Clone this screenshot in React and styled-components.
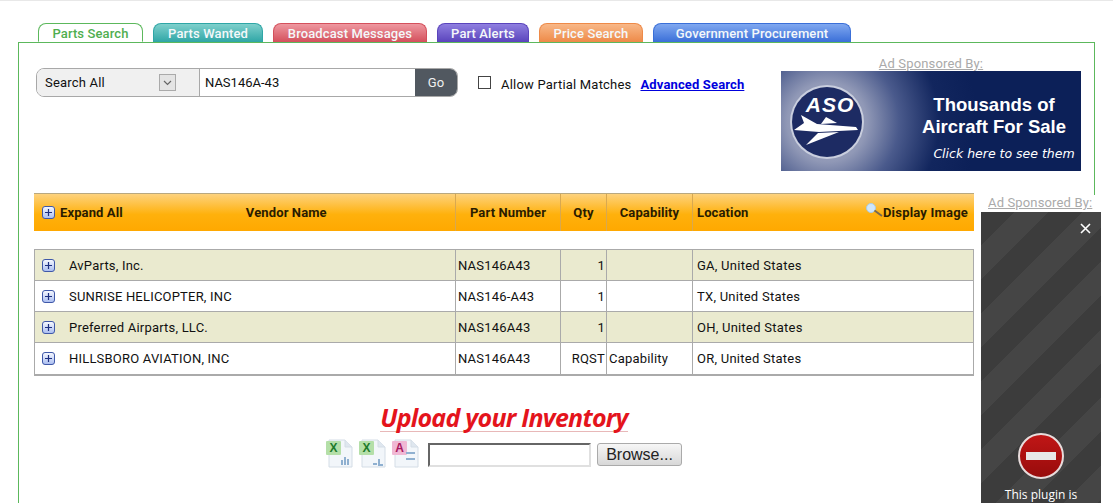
import styled, { createGlobalStyle } from 'styled-components';

const tabs = [
    { label: 'Parts Search', width: 105, active: true },
    { label: 'Parts Wanted', width: 110, from: '#7fd0cc', to: '#2fa6a6' },
    { label: 'Broadcast Messages', width: 154, from: '#ee98a0', to: '#d4505c' },
    { label: 'Part Alerts', width: 92, from: '#8f7fe0', to: '#5a44bc' },
    { label: 'Price Search', width: 104, from: '#f8b888', to: '#ee8a48' },
    { label: 'Government Procurement', width: 198, from: '#80a8f0', to: '#3a6fd8' },
];

const vendors = [
    { name: 'AvParts, Inc.', part: 'NAS146A43', qty: '1', capability: '', location: 'GA, United States' },
    { name: 'SUNRISE HELICOPTER, INC', part: 'NAS146-A43', qty: '1', capability: '', location: 'TX, United States' },
    { name: 'Preferred Airparts, LLC.', part: 'NAS146A43', qty: '1', capability: '', location: 'OH, United States' },
    { name: 'HILLSBORO AVIATION, INC', part: 'NAS146A43', qty: 'RQST', capability: 'Capability', location: 'OR, United States' },
];

const App = () => {
    return (
        <Page>
            <GlobalStyle />
            <TopLine />
            <TabBar>
                {tabs.map(tab => (
                    <Tab key={tab.label} $width={tab.width} $active={tab.active} $from={tab.from} $to={tab.to}>
                        {tab.label}
                    </Tab>
                ))}
            </TabBar>
            <Panel>
                <TopSection>
                    <SearchRow />
                    <BannerHolder />
                </TopSection>
                <ResultsHeader />
                <ResultsTable />
                <Upload />
            </Panel>
            <PluginAd />
        </Page>
    )
}

const SearchRow = () => {
    return (
        <SearchWrapper>
            <SearchBar>
                <SelectBox>
                    Search All
                    <SelectArrow>
                        <svg width="9" height="6" viewBox="0 0 9 6">
                            <path d="M1 1 L4.5 4.5 L8 1" fill="none" stroke="#666" strokeWidth="1.2" />
                        </svg>
                    </SelectArrow>
                </SelectBox>
                <SearchInput>NAS146A-43</SearchInput>
                <GoButton>Go</GoButton>
            </SearchBar>
            <CheckBox />
            <CheckLabel>Allow Partial Matches</CheckLabel>
            <AdvancedLink>Advanced Search</AdvancedLink>
        </SearchWrapper>
    )
}

const BannerHolder = () => {
    return (
        <BannerColumn>
            <SponsorLabel>Ad Sponsored By:</SponsorLabel>
            <Banner>
                <AsoLogo />
                <BannerText>
                    <BannerLine>Thousands of</BannerLine>
                    <BannerLine>Aircraft For Sale</BannerLine>
                    <BannerSmall>Click here to see them</BannerSmall>
                </BannerText>
            </Banner>
        </BannerColumn>
    )
}

const AsoLogo = () => {
    return (
        <svg width="76" height="76" viewBox="0 0 76 76">
            <circle cx="38" cy="38" r="37" fill="#c9cede" />
            <circle cx="38" cy="38" r="35" fill="#1d2b63" />
            <text x="41" y="28" textAnchor="middle" fill="#fff" fontFamily="Liberation Sans" fontWeight="700" fontStyle="italic" fontSize="21" letterSpacing="1">ASO</text>
            <path d="M5 46 L15 39 L12 31 L28 40 L67 43 L69 46 L30 48 Z" fill="#fff" />
            <path d="M17 61 L29 49 L50 48 Z" fill="#fff" />
            <path d="M32 40 L37 33 L48 39 Z" fill="#fff" />
        </svg>
    )
}

const PlusIcon = () => {
    return (
        <svg width="13" height="13" viewBox="0 0 13 13">
            <defs>
                <linearGradient id="plusFill" x1="0" y1="0" x2="0" y2="1">
                    <stop offset="0" stopColor="#f8faff" />
                    <stop offset="1" stopColor="#a8bcf0" />
                </linearGradient>
            </defs>
            <rect x="0.5" y="0.5" width="12" height="12" rx="2.5" fill="url(#plusFill)" stroke="#3f58a8" />
            <path d="M6.5 3 V10 M3 6.5 H10" stroke="#1d2f80" strokeWidth="1.2" />
        </svg>
    )
}

const ResultsHeader = () => {
    return (
        <HeaderRow>
            <HeaderFirst>
                <PlusIcon />
                <ExpandText>Expand All</ExpandText>
                <VendorTitle>Vendor Name</VendorTitle>
            </HeaderFirst>
            <HeaderCell $center>Part Number</HeaderCell>
            <HeaderCell $center>Qty</HeaderCell>
            <HeaderCell $center>Capability</HeaderCell>
            <HeaderCell>
                Location
                <DisplayImage>
                    <MagnifierIcon width="18" height="15" viewBox="0 0 18 15">
                        <circle cx="6" cy="5" r="4.5" fill="#cfe6fa" stroke="#a8cce8" />
                        <path d="M9.5 7.5 L17 13" stroke="#7a6a50" strokeWidth="2" />
                    </MagnifierIcon>
                    Display Image
                </DisplayImage>
            </HeaderCell>
        </HeaderRow>
    )
}

const ResultsTable = () => {
    return (
        <TableWrapper>
            {vendors.map((vendor, index) => (
                <VendorRow key={vendor.name} $shaded={index % 2 === 0}>
                    <VendorCell>
                        <PlusIcon />
                        <VendorName>{vendor.name}</VendorName>
                    </VendorCell>
                    <PartCell>{vendor.part}</PartCell>
                    <QtyCell>{vendor.qty}</QtyCell>
                    <PartCell>{vendor.capability}</PartCell>
                    <LocationCell>{vendor.location}</LocationCell>
                </VendorRow>
            ))}
        </TableWrapper>
    )
}

const FileIcon = ({ letter, color, light, detail }) => {
    return (
        <svg width="28" height="29" viewBox="0 0 28 29">
            <path d="M3 1 H19 L26 8 V28 H3 Z" fill="#f2f6fa" stroke="#d4dde6" />
            <path d="M19 1 V8 H26" fill="#dfe7ef" stroke="#d4dde6" />
            <rect x="0" y="2" width="15" height="14" rx="1" fill={light} />
            <text x="7.5" y="13" textAnchor="middle" fontFamily="Liberation Sans" fontWeight="700" fontSize="12" fill={color}>{letter}</text>
            <path d={detail} fill="none" stroke="#8fb0d0" strokeWidth="2" />
        </svg>
    )
}

const Upload = () => {
    return (
        <UploadWrapper>
            <UploadTitle>Upload your Inventory</UploadTitle>
            <UploadRow>
                <FileIcons>
                    <FileIcon letter="X" color="#1d7a2c" light="#b4dfa8" detail="M16 26 V21 M19 26 V18 M22 26 V20" />
                    <FileIcon letter="X" color="#1d7a2c" light="#b4dfa8" detail="M14 25 H18 M20 20 V26 H24" />
                    <FileIcon letter="A" color="#a81860" light="#f0b8d4" detail="M14 14 H23 M14 20 H23" />
                </FileIcons>
                <FileBox />
                <BrowseButton>Browse...</BrowseButton>
            </UploadRow>
        </UploadWrapper>
    )
}

const PluginAd = () => {
    return (
        <PluginWrapper>
            <PluginLabel>Ad Sponsored By:</PluginLabel>
            <PluginBox>
                <CloseMark>
                    <svg width="11" height="11" viewBox="0 0 11 11">
                        <path d="M1 1 L10 10 M10 1 L1 10" stroke="#fff" strokeWidth="1.6" />
                    </svg>
                </CloseMark>
                <StopSign />
                <PluginText>This plugin is</PluginText>
            </PluginBox>
        </PluginWrapper>
    )
}

const GlobalStyle = createGlobalStyle`
    html, body {
        margin: 0;
        padding: 0;
        background: #fff;
    }

    * {
        box-sizing: border-box;
    }
`

const Page = styled.div`
    position: relative;
    width: 1113px;
    height: 503px;
    overflow: hidden;
    padding: 0 0 0 18px;
    font-family: Roboto, "Liberation Sans", sans-serif;
    font-size: 13px;
    color: #111;
`

const TopLine = styled.div`
    height: 1px;
    margin: 0 0 22px -18px;
    background: #e8e8e8;
`

const TabBar = styled.div`
    display: flex;
    gap: 10px;
    margin-left: 20px;
    position: relative;
    z-index: 1;
`

const Tab = styled.div`
    width: ${props => props.$width}px;
    height: 19px;
    border-radius: 8px 8px 0 0;
    text-align: center;
    line-height: 19px;
    font-weight: 500;
    font-size: 13px;
    letter-spacing: 0.12px;
    color: ${props => props.$active ? '#4fae4f' : '#f4f8fa'};
    background: ${props => props.$active ? '#fff' : `linear-gradient(${props.$from}, ${props.$to})`};
    border: 1px solid ${props => props.$active ? '#5cb85c' : props.$to};
    border-bottom: ${props => props.$active ? '1px solid #fff' : 'none'};
    margin-bottom: ${props => props.$active ? '-1px' : '0'};
`

const Panel = styled.div`
    width: 1077px;
    height: 470px;
    border: 1px solid #5cb85c;
    border-bottom: none;
    padding-left: 15px;
`

const TopSection = styled.div`
    display: flex;
    height: 150px;
`

const SearchWrapper = styled.div`
    display: flex;
    align-items: flex-start;
    width: 747px;
    padding: 25px 0 0 2px;
`

const SearchBar = styled.div`
    display: flex;
    width: 422px;
    height: 29px;
    border: 1px solid #a8a8a8;
    border-radius: 8px;
    overflow: hidden;
    background: #fff;
`

const SelectBox = styled.div`
    width: 163px;
    display: flex;
    align-items: center;
    justify-content: space-between;
    padding: 0 23px 0 8px;
    background: #f0f0f0;
    border-right: 1px solid #a8a8a8;
    letter-spacing: 0.2px;
`

const SelectArrow = styled.div`
    width: 17px;
    height: 17px;
    display: flex;
    align-items: center;
    justify-content: center;
    border: 1px solid #aaa;
    background: #e4e4e4;
`

const SearchInput = styled.div`
    flex: 1;
    display: flex;
    align-items: center;
    padding-left: 5px;
`

const GoButton = styled.div`
    width: 42px;
    display: flex;
    align-items: center;
    justify-content: center;
    background: #515860;
    color: #f0f0f0;
    font-size: 13px;
`

const CheckBox = styled.div`
    width: 13px;
    height: 13px;
    margin: 8px 0 0 20px;
    border: 1px solid #444;
    background: #fff;
`

const CheckLabel = styled.span`
    margin: 9px 0 0 10px;
    line-height: 16px;
    letter-spacing: 0.2px;
`

const AdvancedLink = styled.a`
    margin: 9px 0 0 9px;
    line-height: 16px;
    color: #0000dd;
    font-weight: 700;
    letter-spacing: 0.14px;
    text-decoration: underline;
    cursor: pointer;
`

const BannerColumn = styled.div`
    width: 300px;
    padding-top: 13px;
`

const SponsorLabel = styled.div`
    height: 15px;
    line-height: 15px;
    text-align: center;
    color: #aaa;
    font-size: 13px;
    letter-spacing: 0.15px;
    text-decoration: underline;
    white-space: nowrap;
`

const Banner = styled.div`
    position: relative;
    width: 300px;
    height: 100px;
    display: flex;
    padding: 13px 0 0 8px;
    background: radial-gradient(circle at 46px 51px, #b0b6cc 0, #9098b6 40px, #4a5a8c 72px, #12265e 112px, #0c2058 150px);
    color: #fff;
`

const BannerText = styled.div`
    display: flex;
    flex-direction: column;
    align-items: center;
    width: 150px;
    margin: 10px 0 0 54px;
    font-family: "Liberation Sans", sans-serif;
`

const BannerLine = styled.div`
    font-size: 18.5px;
    font-weight: 700;
    line-height: 22px;
    white-space: nowrap;
`

const BannerSmall = styled.div`
    margin: 8px 0 0 20px;
    font-family: "DejaVu Sans", sans-serif;
    font-size: 12.5px;
    font-style: italic;
    white-space: nowrap;
`

const HeaderRow = styled.div`
    display: grid;
    grid-template-columns: 421px 105px 46px 86px 282px;
    width: 940px;
    height: 38px;
    background: linear-gradient(#fdd27e 0%, #ffb10c 55%, #ffa800 100%);
    border-top: 1px solid #b8a880;
    font-weight: 700;
    letter-spacing: 0.12px;
    color: #2a1c00;
`

const HeaderFirst = styled.div`
    position: relative;
    display: flex;
    align-items: center;
    padding-left: 8px;
`

const ExpandText = styled.span`
    margin-left: 5px;
`

const VendorTitle = styled.span`
    margin-left: 123px;
`

const HeaderCell = styled.div`
    display: flex;
    align-items: center;
    justify-content: ${props => props.$center ? 'center' : 'flex-start'};
    padding-left: ${props => props.$center ? '0' : '4px'};
    border-left: 1px solid #d8a850;
`

const DisplayImage = styled.span`
    display: flex;
    align-items: center;
    margin-left: auto;
    padding-right: 6px;
    letter-spacing: 0.2px;
`

const MagnifierIcon = styled.svg`
    margin-top: -4px;
`

const TableWrapper = styled.div`
    width: 940px;
    margin-top: 18px;
    border: 1px solid #aaa;
    border-bottom: 2px solid #aaa;
`

const VendorRow = styled.div`
    display: grid;
    grid-template-columns: 420px 105px 46px 86px 281px;
    height: 31px;
    background: ${props => props.$shaded ? '#eaeacf' : '#fff'};
    border-bottom: 1px solid #aaa;
    letter-spacing: 0.2px;

    &:last-child {
        border-bottom: none;
    }
`

const VendorCell = styled.div`
    display: flex;
    align-items: center;
    padding-left: 7px;
`

const VendorName = styled.span`
    margin-left: 14px;
`

const PartCell = styled.div`
    display: flex;
    align-items: center;
    padding-left: 2px;
    border-left: 1px solid #aaa;
`

const QtyCell = styled(PartCell)`
    justify-content: flex-end;
    padding-right: 1px;
`

const LocationCell = styled(PartCell)`
    padding-left: 4px;
    letter-spacing: 0.25px;
`

const UploadWrapper = styled.div`
    width: 940px;
    display: flex;
    flex-direction: column;
    align-items: center;
    margin-top: 27px;
`

const UploadTitle = styled.div`
    font-family: "Open Sans", sans-serif;
    font-size: 25px;
    font-weight: 700;
    font-style: italic;
    color: #e4141c;
    letter-spacing: -0.75px;
    border-bottom: 1px solid #e8b8b8;
    line-height: 28px;
`

const UploadRow = styled.div`
    display: flex;
    align-items: flex-start;
    margin-top: 11px;
`

const FileIcons = styled.div`
    display: flex;
    gap: 5px;
    margin-top: -4px;
`

const FileBox = styled.div`
    width: 163px;
    height: 24px;
    margin-left: 8px;
    background: #fff;
    border: 2px solid;
    border-color: #666 #e0e0e0 #e0e0e0 #666;
`

const BrowseButton = styled.div`
    width: 85px;
    height: 23px;
    margin-left: 6px;
    display: flex;
    align-items: center;
    justify-content: center;
    font-family: "Liberation Sans", sans-serif;
    font-size: 16px;
    color: #222;
    background: linear-gradient(#f6f6f6, #d8d8d8);
    border: 1px solid #aaa;
    border-radius: 3px;
`

const PluginWrapper = styled.div`
    position: absolute;
    left: 981px;
    top: 195px;
    width: 120px;
    height: 308px;
    display: flex;
    flex-direction: column;
`

const PluginLabel = styled.div`
    height: 17px;
    line-height: 15px;
    padding-left: 7px;
    background: #fff;
    color: #aaa;
    font-size: 13px;
    letter-spacing: 0.15px;
    text-decoration: underline;
    white-space: nowrap;
`

const PluginBox = styled.div`
    position: relative;
    flex: 1;
    display: flex;
    flex-direction: column;
    align-items: center;
    justify-content: flex-end;
    background: repeating-linear-gradient(135deg, #3c3c3c 0 24px, #454545 24px 48px);
`

const CloseMark = styled.div`
    position: absolute;
    top: 11px;
    right: 10px;
    line-height: 0;
`

const StopSign = styled.div`
    width: 46px;
    height: 46px;
    margin-right: 1px;
    border-radius: 50%;
    border: 2px solid #e8dcdc;
    background: linear-gradient(#c01616, #980c0c);
    display: flex;
    align-items: center;
    justify-content: center;

    &::after {
        content: '';
        width: 30px;
        height: 8px;
        background: #e8e8e8;
    }
`

const PluginText = styled.div`
    margin-top: 8px;
    line-height: 16px;
    height: 16px;
    font-family: "Open Sans", sans-serif;
    font-size: 12px;
    color: #fff;
    white-space: nowrap;
`

export default App;
